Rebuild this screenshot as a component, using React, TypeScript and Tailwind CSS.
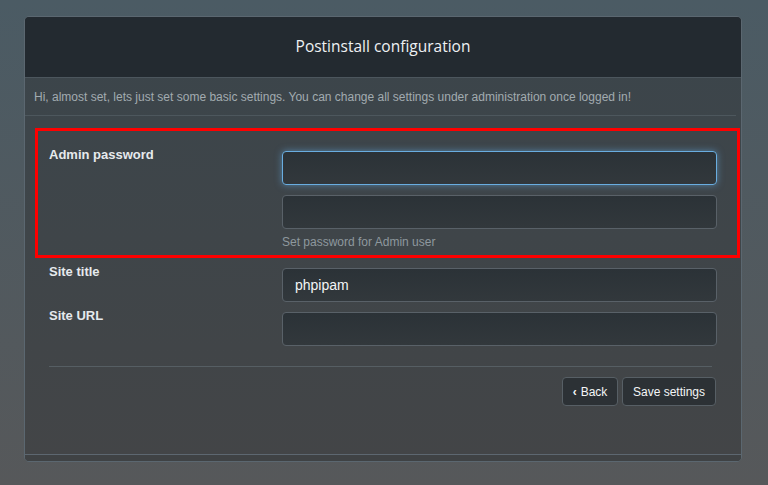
const inputBase =
  "h-[34px] w-full rounded-[4px] border bg-gradient-to-b from-[#2b3237] to-[#32383c] px-3 text-[14px] text-[#f2f4f5] outline-none";

const Field = ({ label, value, children }: { label: string; value?: string; children?: React.ReactNode }) => (
  <div className="flex">
    <div className="w-[233px] pt-[1px] text-[13px] leading-4 font-bold text-[#e6eaed]">{label}</div>
    <div className="mt-[5px] w-[435px]">
      <input
        readOnly
        value={value ?? ""}
        className={`${inputBase} border-[#596168]`}
      />
      {children}
    </div>
  </div>
);

const App = () => {
  return (
    <div
      className="relative h-[485px] w-[768px] overflow-hidden bg-gradient-to-b from-[#4b5b64] to-[#56585a] pt-4"
      style={{ fontFamily: '"Liberation Sans", Arial, sans-serif' }}
    >
      <div className="ml-6 w-[718px] overflow-hidden rounded-[5px] border border-[#5b6770] bg-gradient-to-b from-[#3b454b] to-[#434547]">
        <div
          className="flex h-[61px] items-center justify-center border-b border-[#4c565d] bg-[#232a30] text-[15.5px] text-[#eef1f3]"
          style={{ fontFamily: '"Open Sans", sans-serif' }}
        >
          Postinstall configuration
        </div>
        <div className="flex h-[37px] items-center px-[9px] text-[12px] text-[#a2abb0]">
          Hi, almost set, lets just set some basic settings. You can change all settings under administration once logged in!
        </div>
        <div className="mr-[5px] border-t border-[#4d575d]" />

        <div className="px-6 pt-[31px] pb-[48px]">
          <div className="flex">
            <div className="w-[233px] text-[13px] leading-4 font-bold text-[#e6eaed]">Admin password</div>
            <div className="mt-1 w-[435px]">
              <input
                readOnly
                type="password"
                className={`${inputBase} border-[#69ade0] shadow-[0_0_7px_rgba(102,175,233,0.55)]`}
              />
              <input readOnly type="password" className={`${inputBase} mt-[10px] border-[#596168]`} />
              <div className="mt-[5px] text-[12px] leading-4 text-[#8e989e]">Set password for Admin user</div>
            </div>
          </div>

          <div className="mt-[13px]">
            <Field label="Site title" value="phpipam" />
          </div>
          <div className="mt-[5px]">
            <Field label="Site URL" />
          </div>

          <div className="mt-5 mr-[5px] border-t border-[#565e63]" />

          <div className="mt-[10px] mr-[1px] flex justify-end gap-1">
            <button className="flex h-[29px] w-[56px] items-center justify-center gap-1 rounded-[4px] border border-[#575f65] bg-[#2c3135] text-[12px] text-[#f4f6f7]">
              <span className="text-[12px] font-bold">‹</span>
              <span>Back</span>
            </button>
            <button className="h-[29px] w-[94px] rounded-[4px] border border-[#575f65] bg-[#2c3135] text-[12px] text-[#f4f6f7]">
              Save settings
            </button>
          </div>
        </div>

        <div className="h-[7px] border-t border-[#5d6770] bg-[#3f4244]" />
      </div>

      <div className="pointer-events-none absolute top-[128px] left-[35px] h-[130px] w-[705px] border-[3px] border-[#ff0000]" />
    </div>
  );
};

export default App;
